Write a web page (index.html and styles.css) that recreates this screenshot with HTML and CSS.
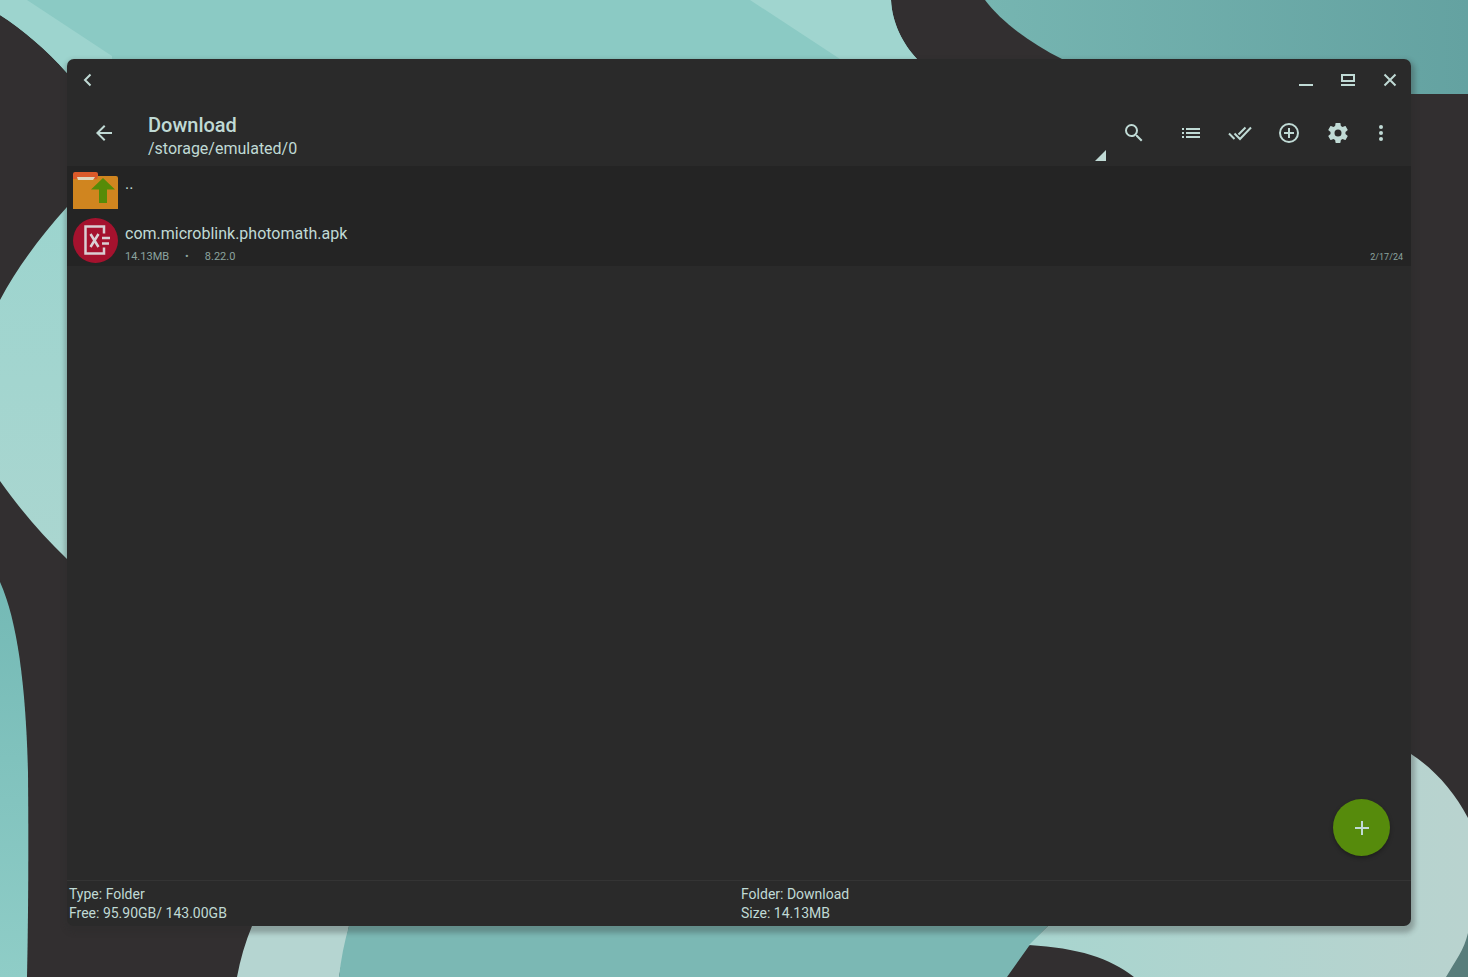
FILE: index.html
```html
<!DOCTYPE html>
<html lang="en">
<head>
  <meta charset="UTF-8" />
  <meta name="viewport" content="width=device-width, initial-scale=1.0"/>
  <title>Download</title>
  <link rel="stylesheet" href="styles.css">
</head>
<body>

<!-- Wallpaper -->
<svg class="wallpaper" viewBox="0 0 1468 977" preserveAspectRatio="none" aria-hidden="true">
  <defs>
    <linearGradient id="topRight" x1="0" x2="1"><stop offset="0" stop-color="#76b5b1"/><stop offset="1" stop-color="#64a2a1"/></linearGradient>
    <linearGradient id="left" x1="0" y1="0" x2="0" y2="1"><stop offset="0" stop-color="#9bd4ce"/><stop offset="1" stop-color="#abd6d0"/></linearGradient>
    <linearGradient id="lowLeft" x1="0" y1="0" x2="0" y2="1"><stop offset="0" stop-color="#74b9b5"/><stop offset="1" stop-color="#8fcdc7"/></linearGradient>
    <linearGradient id="lowRight" x1="0" x2="1"><stop offset="0" stop-color="#a8d5cf"/><stop offset="1" stop-color="#b9d3cf"/></linearGradient>
  </defs>
  <rect width="1468" height="977" fill="#322f30"/>
  <path d="M0 0H891C892 23 903 44 917 59V110H100L67 73C47 50 22 29 0 15Z" fill="#8bcac4"/>
  <path d="M0 0H27L112 56V110H100L67 73C47 50 22 29 0 15Z" fill="#9dd4ce"/>
  <path d="M750 0H891C892 23 903 44 917 59V70H856L840 59Z" fill="#a0d5cf"/>
  <path d="M985 0C1003 24 1034 45 1062 59L1150 94H1468V0Z" fill="url(#topRight)"/>
  <path d="M80 192L67 207C40 237 17 268 0 300V481C19 508 42 535 67 559L80 571Z" fill="url(#left)"/>
  <path d="M0 582C18 622 26 690 28 773Q29 880 27 977H0Z" fill="url(#lowLeft)"/>
  <path d="M252 926L260 900H360L349 926L339 977H237Q242 950 252 926Z" fill="#b5d5d1"/>
  <path d="M349 926L355 900H1070L1048 926L1029 946L1007 977H339Q342 950 349 926Z" fill="#7bb8b4"/>
  <path d="M1400 748L1411 754C1434 769 1454 791 1468 818V977H1134C1110 958 1078 948 1029 945L1048 926L1070 900H1400Z" fill="url(#lowRight)"/>
  <path d="M1468 933C1464 950 1456 960 1446 977H1468Z" fill="#587d7b"/>
</svg>

<main class="window">

  <header class="titlebar">
    <button class="icon-btn" aria-label="Back">
      <svg width="24" height="24" viewBox="0 0 24 24"><path class="line" d="M14.5 6.500L9 12l5.500 5.500"/></svg>
    </button>
    <div class="window-controls">
      <button class="icon-btn" aria-label="Minimize">
        <svg width="24" height="24" viewBox="0 0 24 24"><path d="M5 16h14v2H5z"/></svg>
      </button>
      <button class="icon-btn" aria-label="Maximize">
        <svg width="24" height="24" viewBox="0 0 24 24"><path fill-rule="evenodd" d="M5 6h14v8H5zM7 8v4h10V8zM5 16h14v2H5z"/></svg>
      </button>
      <button class="icon-btn" aria-label="Close">
        <svg width="24" height="24" viewBox="0 0 24 24"><path class="line" d="M6.500 6.500l11 11M17.500 6.500l-11 11"/></svg>
      </button>
    </div>
  </header>

  <nav class="toolbar">
    <button class="icon-btn up" aria-label="Navigate up">
      <svg width="24" height="24" viewBox="0 0 24 24"><path d="M20 11H7.830l5.590-5.590L12 4l-8 8 8 8 1.410-1.410L7.830 13H20z"/></svg>
    </button>
    <button class="location">
      <span class="title">Download</span>
      <span class="path">/storage/emulated/0</span>
    </button>
    <button class="icon-btn search" aria-label="Search">
      <svg width="24" height="24" viewBox="0 0 24 24"><path d="M15.500 14h-.79l-.28-.27A6.470 6.470 0 0 0 16 9.500 6.500 6.500 0 1 0 9.500 16c1.610 0 3.090-.59 4.230-1.570l.27.28v.79l5 4.990L20.490 19zm-6 0a4.500 4.500 0 1 1 0-9 4.500 4.500 0 0 1 0 9z"/></svg>
    </button>
    <button class="icon-btn action" aria-label="View as list">
      <svg width="24" height="24" viewBox="0 0 24 24"><path d="M3 7h2v2H3zM3 11h2v2H3zM3 15h2v2H3zM7 7h14v2H7zM7 11h14v2H7zM7 15h14v2H7z"/></svg>
    </button>
    <button class="icon-btn action" aria-label="Select all">
      <svg width="24" height="24" viewBox="0 0 24 24"><path class="line" d="M1 12.500L6.500 18M6.500 12.500L12 18 23 6.500M10.500 13.500L17.500 6.500"/></svg>
    </button>
    <button class="icon-btn action" aria-label="New">
      <svg width="24" height="24" viewBox="0 0 24 24"><path d="M13 7h-2v4H7v2h4v4h2v-4h4v-2h-4zM12 2a10 10 0 1 0 0 20 10 10 0 0 0 0-20zm0 18a8 8 0 1 1 0-16 8 8 0 0 1 0 16z"/></svg>
    </button>
    <button class="icon-btn action" aria-label="Settings">
      <svg width="24" height="24" viewBox="0 0 24 24"><path d="M19.430 12.980c.04-.32.07-.64.07-.98s-.03-.66-.07-.98l2.110-1.650c.19-.15.24-.42.12-.64l-2-3.460c-.12-.22-.39-.3-.61-.22l-2.490 1c-.52-.4-1.080-.73-1.690-.98l-.38-2.650C14.460 2.180 14.250 2 14 2h-4c-.25 0-.46.18-.49.42l-.38 2.650c-.61.25-1.170.59-1.690.98l-2.490-1c-.23-.09-.49 0-.61.22l-2 3.460c-.13.22-.07.49.12.64l2.110 1.650c-.04.32-.07.65-.07.98s.03.66.07.98l-2.110 1.650c-.19.15-.24.42-.12.64l2 3.460c.12.22.39.3.61.22l2.490-1c.52.4 1.080.73 1.690.98l.38 2.650c.03.24.24.42.49.42h4c.25 0 .46-.18.49-.42l.38-2.650c.61-.25 1.170-.59 1.690-.98l2.490 1c.23.09.49 0 .61-.22l2-3.460c.12-.22.07-.49-.12-.64zM12 15.500a3.500 3.500 0 1 1 0-7 3.500 3.500 0 0 1 0 7z"/></svg>
    </button>
    <button class="icon-btn more" aria-label="More options">
      <svg width="24" height="24" viewBox="0 0 24 24"><circle cx="12" cy="6" r="2"/><circle cx="12" cy="12" r="2"/><circle cx="12" cy="18" r="2"/></svg>
    </button>
  </nav>

  <!-- File list -->
  <ul class="files">
    <li>
      <a class="file" href="#up">
        <svg class="thumb" viewBox="0 0 45 45">
          <path d="M0 6q0-2 2-2h21q2 0 2 2v6H0z" fill="#dc5a2a"/>
          <path d="M0 11h24l1-3h18q2 0 2 2v31H0z" fill="#d0851f"/>
          <path d="M4 9h18l-2 3H5z" fill="#dfd5bd"/>
          <path d="M30 10L42 21.500h-8V35h-8V21.500h-8z" fill="#568b08"/>
        </svg>
        <span class="info"><span class="name">..</span></span>
      </a>
    </li>
    <li>
      <a class="file" href="#apk">
        <svg class="thumb" viewBox="0 0 45 45">
          <circle cx="22.500" cy="22.500" r="22.500" fill="#a5122e"/>
          <g fill="none" stroke="#d9cfd3" stroke-width="2.500">
            <path d="M31 15.500V8.500H12.500v27H31v-6"/>
            <path d="M17.500 16l8 13M25.500 16l-8 13"/>
            <path d="M29 20h8M29 25.500h7"/>
          </g>
        </svg>
        <span class="info">
          <span class="name">com.microblink.photomath.apk</span>
          <span class="meta">
            <span>14.13MB</span>
            <span>•</span>
            <span>8.22.0</span>
            <time class="date" datetime="2024-02-17">2/17/24</time>
          </span>
        </span>
      </a>
    </li>
  </ul>

  <div class="content">
    <button class="fab" aria-label="Add">
      <svg width="24" height="24" viewBox="0 0 24 24"><path d="M19 13h-6v6h-2v-6H5v-2h6V5h2v6h6z"/></svg>
    </button>
  </div>

  <footer class="status">
    <div>
      <p>Type: Folder</p>
      <p>Free: 95.90GB/ 143.00GB</p>
    </div>
    <div>
      <p>Folder: Download</p>
      <p>Size: 14.13MB</p>
    </div>
  </footer>

</main>

</body>
</html>
```

FILE: styles.css
```css
* {
  box-sizing: border-box;
}

body {
  margin: 0;
  min-height: 100vh;
  padding: 59px 57px 51px 67px;
  display: flex;
  background: #322f30;
  color: #c0dad5;
  font-family: Roboto, "Liberation Sans", sans-serif;
}

.wallpaper {
  position: absolute;
  top: 0;
  left: 0;
  width: 100%;
  height: 100%;
  z-index: -1;
}

.window {
  flex: 1;
  display: flex;
  flex-direction: column;
  background: #2a2a2a;
  border-radius: 7px;
  box-shadow: 1px 4px 5px 3px rgba(44, 42, 43, 0.3);
  overflow: hidden;
}

button {
  border: 0;
  padding: 0;
  background: none;
  color: inherit;
  font: inherit;
  cursor: pointer;
}

svg {
  display: block;
  fill: currentColor;
}

.line {
  fill: none;
  stroke: currentColor;
  stroke-width: 2;
}

.icon-btn {
  display: flex;
  align-items: center;
  justify-content: center;
  width: 42px;
  height: 42px;
}

.titlebar {
  display: flex;
  justify-content: space-between;
}

.window-controls {
  display: flex;
}

/* Toolbar */
.toolbar {
  display: flex;
  align-items: center;
  height: 65px;
  padding: 0 11px 1px 0;
}

.up {
  width: 74px;
}

.location {
  position: relative;
  flex: 1;
  align-self: stretch;
  display: flex;
  flex-direction: column;
  justify-content: center;
  padding: 7px 7px 0;
  text-align: left;
  line-height: 24px;
}

.location::after {
  content: "";
  position: absolute;
  right: 0;
  bottom: 4px;
  border-left: 11px solid transparent;
  border-bottom: 11px solid currentColor;
}

.title {
  font-size: 20px;
  font-weight: 500;
}

.path {
  font-size: 16px;
}

.search {
  width: 56px;
  margin-right: 4px;
}

.action {
  width: 49px;
}

.more {
  width: 38px;
}

/* Files */
.files {
  margin: 0;
  padding: 0;
  list-style: none;
  background: #242424;
}

.file {
  display: flex;
  align-items: center;
  gap: 7px;
  height: 50px;
  padding: 0 8px 1px 6px;
  color: inherit;
  text-decoration: none;
}

.thumb {
  width: 45px;
  height: 45px;
}

.info {
  flex: 1;
  align-self: stretch;
  display: flex;
  flex-direction: column;
  gap: 5px;
  padding-top: 6px;
}

.name {
  font-size: 16px;
  line-height: 24px;
}

.meta {
  display: flex;
  gap: 16px;
  color: #8ba39f;
  font-size: 11px;
  line-height: 12px;
}

.date {
  margin-left: auto;
  font-size: 9px;
}

.content {
  flex: 1;
  display: flex;
  align-items: flex-end;
  justify-content: flex-end;
  padding: 24px 21px;
}

.fab {
  display: flex;
  align-items: center;
  justify-content: center;
  width: 57px;
  height: 57px;
  border-radius: 50%;
  background: #568b0c;
  box-shadow: 0 2px 4px rgba(0, 0, 0, 0.3);
}

.status {
  display: grid;
  grid-template-columns: 1fr 1fr;
  padding: 4px 0 3px;
  border-top: 1px solid #343434;
  font-size: 14px;
  line-height: 19px;
}

.status div {
  padding-left: 2px;
}

.status p {
  margin: 0;
}
```
